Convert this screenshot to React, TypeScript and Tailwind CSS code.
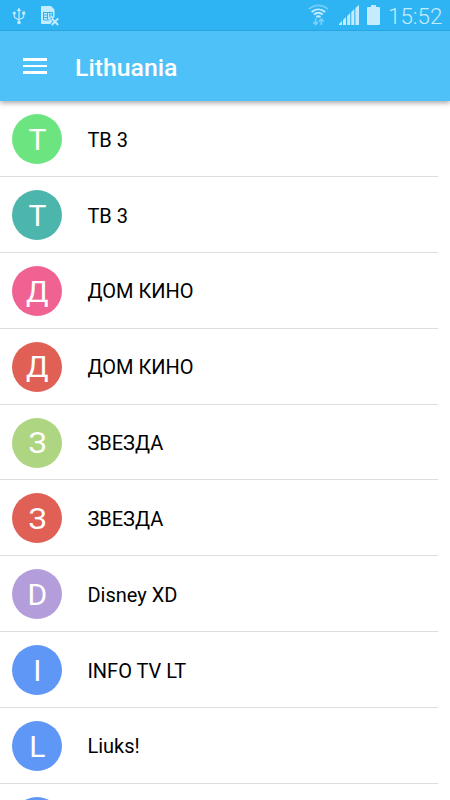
type Channel = {
  id: number;
  name: string;
  color: string;
};

const channels: Channel[] = [
  { id: 1, name: 'ТВ 3', color: 'bg-[#6ce580]' },
  { id: 2, name: 'ТВ 3', color: 'bg-[#4db6ac]' },
  { id: 3, name: 'ДОМ КИНО', color: 'bg-[#f06292]' },
  { id: 4, name: 'ДОМ КИНО', color: 'bg-[#e06055]' },
  { id: 5, name: 'ЗВЕЗДА', color: 'bg-[#aed581]' },
  { id: 6, name: 'ЗВЕЗДА', color: 'bg-[#e06055]' },
  { id: 7, name: 'Disney XD', color: 'bg-[#b39ddb]' },
  { id: 8, name: 'INFO TV LT', color: 'bg-[#5e97f6]' },
  { id: 9, name: 'Liuks!', color: 'bg-[#5e97f6]' },
  { id: 10, name: '', color: 'bg-[#5e97f6]' },
];

function UsbIcon() {
  return (
    <svg className="h-[18px] w-[14px]" viewBox="0 0 14 18" fill="none" stroke="currentColor" strokeWidth="1.2">
      <path d="M7 3v12M2.300 7v2.200c0 1 .6 1.600 1.600 2L7 13M11.700 6.500v2.700c0 1-.6 1.600-1.600 2L7 12.500" />
      <path d="M7 .5 4.800 4h4.400z" fill="currentColor" stroke="none" />
      <circle cx="7" cy="15.500" r="1.800" fill="currentColor" stroke="none" />
      <circle cx="2.300" cy="6" r="1.600" fill="currentColor" stroke="none" />
      <path d="M10.200 4.500h3v3h-3z" fill="currentColor" stroke="none" />
    </svg>
  );
}

function SimErrorIcon() {
  return (
    <svg className="h-5 w-[18px]" viewBox="0 0 18 20" fill="none">
      <path d="M1 0h9l3.500 3.500v7L12 12.500l-1.500-1L9 12.500l2.300 3L9.500 17.500v.5H1a1 1 0 0 1-1-1V1a1 1 0 0 1 1-1z" fill="currentColor" />
      <path d="M2.500 6.500h9v4M2.500 6v8h6M3 9h3M3 11.500h3M8.500 9h3M6.500 6.500v7M8.800 6.500v5" stroke="#2fb4f3" />
      <path d="m10.700 12.500 6.500 6.500m0-6.500-6.500 6.500" stroke="currentColor" strokeWidth="1.800" />
    </svg>
  );
}

function WifiIcon() {
  return (
    <svg className="h-[22px] w-[21px]" viewBox="0 0 21 22" fill="none" stroke="currentColor">
      <path d="M.8 5.200c5.600-5 13.600-5 19.200 0" strokeWidth="1.800" opacity=".45" />
      <path d="M3.600 8c4.100-3.500 9.500-3.500 13.600 0" strokeWidth="1.900" />
      <path d="M6 10.500c2.700-2.200 6.100-2.200 8.800 0" strokeWidth="1.900" />
      <path d="M8.300 13c1.300-.9 2.900-.9 4.200 0" strokeWidth="1.900" />
      <path d="M7.700 14.500v6m-2.500-2.500 2.500 2.500 2.300-2.500M13.300 21v-6m-2.300 2.500 2.300-2.500 2.500 2.500" strokeWidth="1.700" opacity=".5" />
    </svg>
  );
}

function SignalIcon() {
  return (
    <svg className="h-5 w-5" viewBox="0 0 20 20" fill="currentColor">
      <path d="M0 20v-1l3-3v4zM4 20v-5l3-3v8zM8.200 20v-9l3-3v12zM12.300 20V7l3-3v16zM16.400 20V3L20 0v20z" />
    </svg>
  );
}

function BatteryIcon() {
  return (
    <svg className="h-5 w-[13px]" viewBox="0 0 13 20" fill="currentColor">
      <path d="M4 0h5v2h3a1 1 0 0 1 1 1v16a1 1 0 0 1-1 1H1a1 1 0 0 1-1-1V3a1 1 0 0 1 1-1h3z" />
    </svg>
  );
}

function StatusBar() {
  return (
    <div className="flex h-[31px] items-center justify-between border-b border-[#28a4df] bg-[#2fb4f3] pr-[7px] pl-3 text-[#c5ebff]">
      <div className="flex items-center gap-[15px] pt-[2px]">
        <UsbIcon />
        <SimErrorIcon />
      </div>
      <div className="flex items-center">
        <WifiIcon />
        <div className="ml-[10px]">
          <SignalIcon />
        </div>
        <div className="ml-2">
          <BatteryIcon />
        </div>
        <span className="ml-2 w-[55px] pt-[2px] text-[22.400px] leading-7 font-light">15:52</span>
      </div>
    </div>
  );
}

function Toolbar() {
  return (
    <header className="flex h-[70px] items-center bg-[#4fc1f9] pl-[23px] text-white">
      <button className="flex w-6 flex-col gap-[4px]" aria-label="Menu">
        <span className="h-[2.500px] w-full bg-white" />
        <span className="h-[2.500px] w-full bg-white" />
        <span className="h-[2.500px] w-full bg-white" />
      </button>
      <h1 className="ml-7 pt-[3px] text-[24.800px] leading-8 font-medium">Lithuania</h1>
    </header>
  );
}

function ChannelRow({ channel }: { channel: Channel }) {
  return (
    <li className="mr-[12.500px] flex h-[75.840px] items-center border-b border-[#dedede] pt-px pl-[12.400px]">
      <div className={`flex size-[50px] shrink-0 items-center justify-center rounded-full text-[30px] leading-none text-white ${channel.color}`}>
        <span className="pt-[1.500px]">{channel.name.charAt(0)}</span>
      </div>
      <span className="ml-[25px] pt-px text-[20px] leading-6 text-black">{channel.name}</span>
    </li>
  );
}

export default function App() {
  return (
    <div className="h-[800px] w-[450px] overflow-hidden bg-white font-['Roboto',sans-serif]">
      <div className="relative shadow-[0_2px_5px_rgba(0,0,0,0.35)]">
        <StatusBar />
        <Toolbar />
      </div>
      <ul className="pt-[0.300px]">
        {channels.map((channel) => (
          <ChannelRow key={channel.id} channel={channel} />
        ))}
      </ul>
    </div>
  );
}
